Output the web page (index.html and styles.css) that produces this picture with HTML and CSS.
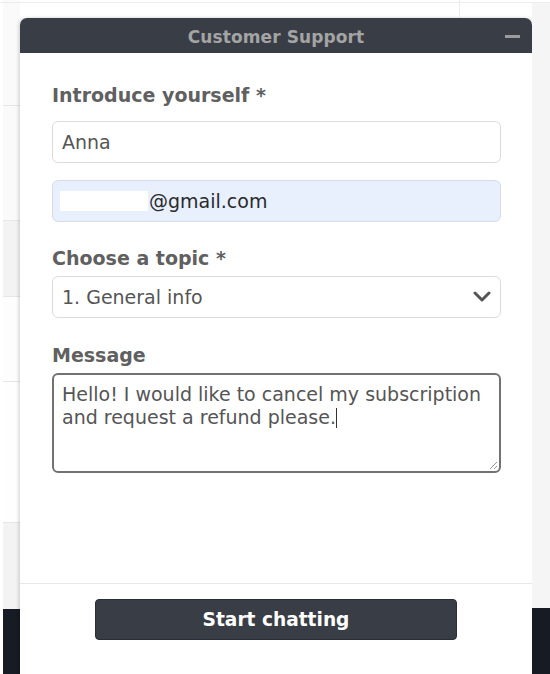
FILE: index.html
```html
<!DOCTYPE html>
<html lang="en">
<head>
<meta charset="utf-8">
<title>Customer Support</title>
<link rel="stylesheet" href="styles.css">
</head>
<body>
<div class="page">
  <div class="topline"><span class="vline"></span></div>
  <div class="row">
    <aside class="side side-left">
      <div class="band b1"></div>
      <div class="band b2"></div>
      <div class="band b3 grey"></div>
      <div class="band b4"></div>
      <div class="band b5"></div>
      <div class="band b6 grey"></div>
      <div class="band dark"></div>
    </aside>
    <section class="widget">
      <header class="head">
        <span class="title">Customer Support</span>
        <span class="minus"></span>
      </header>
      <div class="form">
        <div class="label">Introduce yourself *</div>
        <div class="field">Anna</div>
        <div class="field autofill"><span class="mask"></span>@gmail.com</div>
        <div class="label l2">Choose a topic *</div>
        <div class="field select">
          <span>1. General info</span>
          <svg class="chev" width="18" height="12" viewBox="0 0 18 12"><polyline points="2,2 9,9 16,2" fill="none" stroke="#555" stroke-width="3" stroke-linecap="round" stroke-linejoin="round"/></svg>
        </div>
        <div class="label l3">Message</div>
        <div class="area">
          <span>Hello! I would like to cancel my subscription and request a refund please.</span><span class="caret"></span>
          <svg class="grip" width="10" height="10" viewBox="0 0 10 10"><path d="M9 2 L2 9 M9 6 L6 9" stroke="#999" stroke-width="1"/></svg>
        </div>
      </div>
      <footer class="foot">
        <button class="start">Start chatting</button>
      </footer>
    </section>
    <aside class="side side-right">
      <div class="rband"></div>
      <div class="band dark"></div>
    </aside>
  </div>
</div>
</body>
</html>
```
FILE: styles.css
```css
* { box-sizing: border-box; }
html, body { margin: 0; padding: 0; }
body {
  width: 550px;
  height: 674px;
  overflow: hidden;
  background: #ffffff;
  font-family: "DejaVu Sans", Verdana, sans-serif;
}
.page { display: flex; flex-direction: column; height: 674px; }
.topline {
  height: 18px;
  border-top: 1px solid #ececec;
  margin-top: 2px;
  position: relative;
  flex: none;
  margin-bottom: -20px;
}
.topline .vline {
  position: absolute;
  left: 459px;
  top: -3px;
  width: 1px;
  height: 17px;
  background: #ececec;
}
.row { display: flex; flex: 1; padding-top: 18px; }
.side { display: flex; flex-direction: column; flex: none; }
.side-left { width: 20px; margin-top: -18px; padding-left: 3px; background: #fff; }
.side-right { width: 18px; margin-top: -16px; background: #f5f5f5; }
.rband { flex: 1; }
.band { border-bottom: 1px solid #e6e6e6; background: #f9f9f9; }
.b1 { height: 106px; background: #fafafa; }
.b2 { height: 115px; background: #fafafa; }
.b3 { height: 76px; }
.grey { background: #f3f3f3; }
.b4 { height: 85px; background: #fdfdfd; }
.b5 { height: 141px; background: #fefefe; }
.b6 { height: 86px; border-bottom: none; }
.band.dark { flex: 1; background: #171b24; border: none; }
.side-right .band.dark { flex: none; height: 66px; }

.widget {
  width: 512px;
  flex: none;
  display: flex;
  flex-direction: column;
  background: #fff;
  box-shadow: -2px 0 3px rgba(0,0,0,0.12), 2px 0 3px rgba(0,0,0,0.12);
  border-radius: 7px 7px 0 0;
}
.head {
  height: 35px;
  flex: none;
  background: #393d45;
  border-radius: 7px 7px 0 0;
  display: flex;
  align-items: center;
  justify-content: center;
  position: relative;
  padding-top: 2px;
}
.title {
  color: #a4a4a4;
  font-weight: bold;
  font-size: 17px;
  letter-spacing: 0.1px;
}
.minus {
  position: absolute;
  right: 12px;
  top: 17px;
  width: 15px;
  height: 3px;
  background: #9c9c9c;
}
.form {
  flex: 1;
  padding: 31px 31px 0 32px;
  display: flex;
  flex-direction: column;
}
.label {
  color: #606060;
  font-weight: bold;
  font-size: 19px;
  line-height: 22px;
  margin-bottom: 15px;
}
.l2 { margin-top: 25px; margin-bottom: 7px; }
.l3 { margin-top: 26px; margin-bottom: 7px; }
.field {
  height: 42px;
  border: 1px solid #dcdcdc;
  border-radius: 6px;
  padding: 0 9px;
  display: flex;
  align-items: center;
  color: #555;
  font-size: 19px;
  margin-bottom: 17px;
}
.field.autofill { background: #e8f0fe; border-color: #d6dde8; color: #2a2a2a; margin-bottom: 0; }
.mask {
  display: inline-block;
  width: 88px;
  height: 20px;
  background: #fff;
  margin-left: -2px;
  margin-right: 1px;
}
.field.select { justify-content: space-between; margin-bottom: 0; padding-right: 9px; }
.chev { display: block; }
.area {
  position: relative;
  height: 100px;
  border: 2px solid #727272;
  border-radius: 6px;
  padding: 8px 8px;
  color: #555;
  font-size: 19px;
  line-height: 23px;
}
.caret {
  display: inline-block;
  width: 1px;
  height: 20px;
  background: #333;
  vertical-align: -4px;
}
.grip { position: absolute; right: 1px; bottom: 1px; }
.foot {
  height: 91px;
  flex: none;
  border-top: 1px solid #e8e8e8;
  display: flex;
  justify-content: center;
  padding-top: 15px;
}
.start {
  width: 362px;
  height: 41px;
  background: #393d45;
  border: 1px solid #2a2d33;
  border-radius: 4px;
  color: #fff;
  font-family: "DejaVu Sans", Verdana, sans-serif;
  font-weight: bold;
  font-size: 18.6px;
  cursor: pointer;
}
```
